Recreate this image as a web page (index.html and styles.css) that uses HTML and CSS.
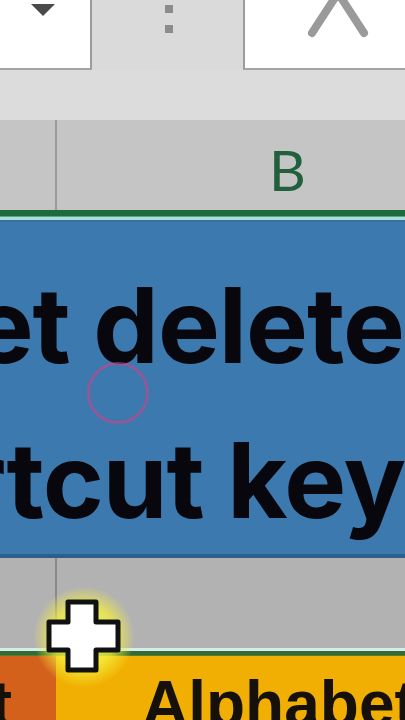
FILE: index.html
```html
<!DOCTYPE html>
<html>
<head>
<meta charset="utf-8">
<link rel="stylesheet" href="styles.css">
</head>
<body>
<div class="screen">
  <div class="toolbar">
    <div class="namebox">
      <svg class="dropdown" width="24" height="14" viewBox="0 0 24 14"><path d="M0 1 H24 L12 13 Z" fill="#4a4a4a"/></svg>
    </div>
    <div class="grip">
      <span class="dot"></span>
      <span class="dot"></span>
    </div>
    <div class="fxbox">
      <svg class="cancel" width="80" height="40" viewBox="0 0 80 40"><path d="M11 33 L50 -27 M63 33 L24 -27" stroke="#9a9a9a" stroke-width="8" stroke-linecap="round" fill="none"/></svg>
    </div>
  </div>
  <div class="band"></div>
  <div class="colhead">
    <div class="corner"></div>
    <div class="colB">B</div>
  </div>
  <div class="selline"></div>
  <div class="bluecell">
    <div class="line line1">Shortcut to sheet delete</div>
    <div class="line line2">Sheet delete shortcut key</div>
  </div>
  <div class="grayrow">
    <div class="rowcell first"></div>
    <div class="rowcell"></div>
  </div>
  <div class="rowsep"></div>
  <div class="orangerow">
    <div class="ocell left">Text</div>
    <div class="ocell right">Alphabet</div>
  </div>
  <div class="clickring"></div>
  <div class="cursor">
    <div class="glow"></div>
    <svg class="plus" width="76" height="76" viewBox="0 0 76 76"><path d="M22 3 H50 V23 H72 V51 H50 V71 H22 V51 H3 V23 H22 Z" fill="#ffffff" stroke="#111" stroke-width="5" stroke-linejoin="round"/></svg>
  </div>
</div>
</body>
</html>
```
FILE: styles.css
```css
* { box-sizing: border-box; }
html, body { margin: 0; padding: 0; }
body { width: 405px; height: 720px; overflow: hidden; background: #dadada; font-family: "Inter", "Liberation Sans", sans-serif; }
.screen { position: relative; width: 405px; height: 720px; overflow: hidden; display: flex; flex-direction: column; }
.toolbar { height: 70px; display: flex; background: #dadada; flex: none; }
.namebox { width: 92px; height: 70px; background: #ffffff; border-right: 2px solid #9c9c9c; border-bottom: 2px solid #a4a4a4; display: flex; justify-content: center; align-items: flex-start; padding-top: 3px; }
.dropdown { display: block; margin-left: -4px; }
.grip { width: 151px; display: flex; flex-direction: column; align-items: center; gap: 12px; padding-top: 5px; padding-left: 2px; }
.dot { width: 8px; height: 8px; background: #8c8c8c; display: block; }
.fxbox { flex: 1; height: 70px; background: #ffffff; border-left: 2px solid #9c9c9c; border-bottom: 2px solid #a4a4a4; position: relative; overflow: hidden; }
.cancel { position: absolute; left: 56px; top: 0; }
.band { height: 50px; background: #dcdcdc; flex: none; }
.colhead { height: 90px; display: grid; grid-template-columns: 57px 1fr; background: #c5c5c5; flex: none; }
.corner { border-right: 2px solid #9a9a9a; }
.colB { font-family: "Lato", "Liberation Sans", sans-serif; font-size: 57px; color: #215f3d; padding-top: 21px; padding-left: 212px; line-height: 1; }
.selline { height: 12px; flex: none; background: linear-gradient(#1f6a3d 0 6px, #5aa67a 6px 7px, #a9dde2 7px 10px, #3a6f9e 10px 12px); }
.bluecell { height: 336px; background: #3c79ae; flex: none; overflow: hidden; border-bottom: 4px solid #2e5f8c; }
.line { white-space: nowrap; display: flex; justify-content: flex-end; font-weight: 700; color: #07070d; font-size: 104px; letter-spacing: -1px; line-height: 155px; }
.line1 { margin-top: 26px; padding-right: 1px; }
.line2 { padding-right: 0; }
.grayrow { height: 90px; display: grid; grid-template-columns: 57px 1fr; background: #b2b2b2; flex: none; }
.rowcell.first { border-right: 2px solid #8a8a8a; }
.rowsep { height: 8px; flex: none; background: linear-gradient(#d6ecea 0 3px, #2f6b38 3px 7px, #5f7a20 7px 8px); }
.orangerow { flex: 1; display: grid; grid-template-columns: 56px 1fr; }
.ocell { font-family: "Liberation Sans", Arial, sans-serif; font-weight: 700; font-size: 64px; color: #15110a; white-space: nowrap; overflow: hidden; padding-top: 16px; line-height: 1; }
.ocell.left { background: #d3611b; display: flex; justify-content: flex-end; padding-right: 44px; }
.ocell.right { background: #f0af02; padding-left: 86px; }
.clickring { position: absolute; left: 87px; top: 362px; width: 62px; height: 62px; border-radius: 50%; border: 3px solid rgba(196, 70, 140, 0.6); }
.cursor { position: absolute; left: 46px; top: 599px; width: 76px; height: 76px; }
.glow { position: absolute; left: -12px; top: -12px; width: 100px; height: 100px; border-radius: 50%; background: radial-gradient(circle, rgba(255,255,120,0.95) 0%, rgba(245,240,60,0.75) 45%, rgba(240,230,60,0) 72%); }
.plus { position: absolute; left: 0; top: 0; }
```
